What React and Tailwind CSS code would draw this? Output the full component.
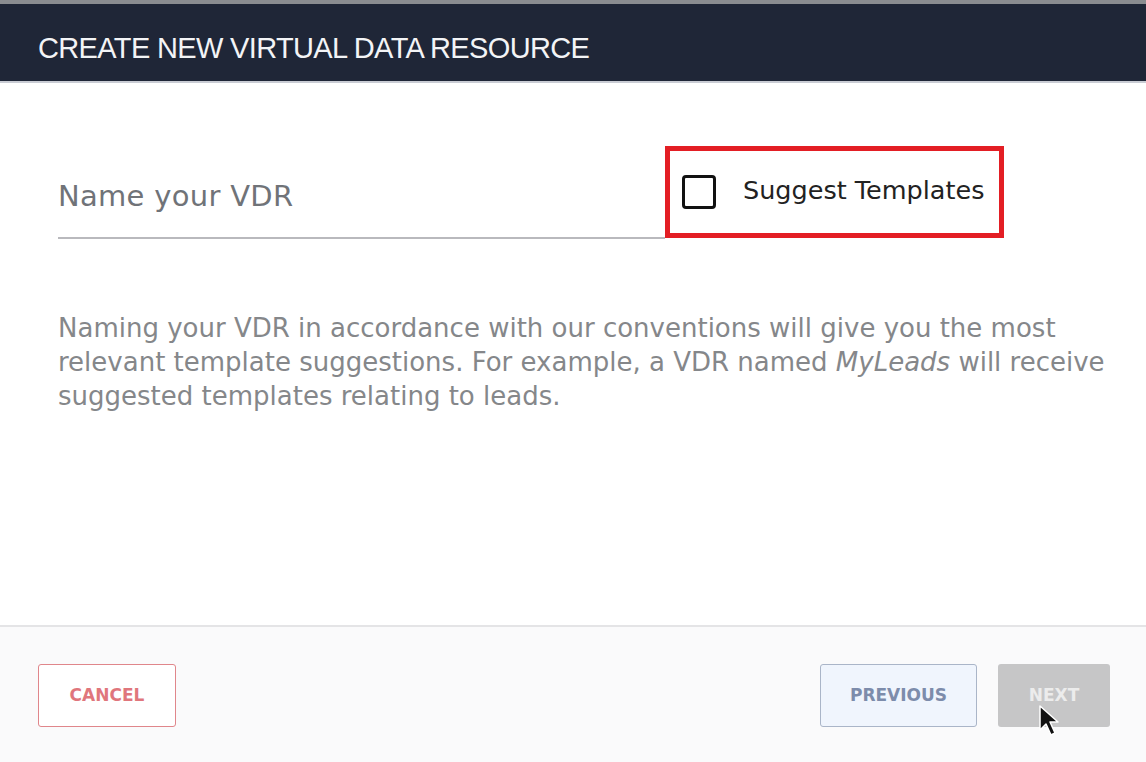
import React from "react";

const body = { fontFamily: "'DejaVu Sans', Verdana, sans-serif" };

const Cursor = () => (
  <svg
    width="22"
    height="34"
    viewBox="0 0 22 34"
    className="absolute left-[40px] top-[40px]"
  >
    <path
      d="M2 2 L2 26 L8 20 L13 31 L17 29 L12 18 L20 18 Z"
      fill="#111"
      stroke="#fff"
      strokeWidth="1.5"
      strokeLinejoin="round"
    />
  </svg>
);

const App = () => {
  return (
    <div className="w-[1146px] h-[762px] flex flex-col bg-white overflow-hidden" style={body}>
      <div className="h-[4px] bg-[#8a8c90] shrink-0" />
      <div className="h-[79px] shrink-0 bg-[#1f2637] border-b-2 border-[#c9ccd4] flex items-center pl-[38px]">
        <h1
          className="text-[29px] text-[#f3f4f6] tracking-[-0.65px] mt-[12px]"
          style={{ fontFamily: "'Liberation Sans', Arial, sans-serif" }}
        >
          CREATE NEW VIRTUAL DATA RESOURCE
        </h1>
      </div>

      <div className="flex-1 px-[58px] pt-[62px]">
        <div className="flex items-end">
          <div className="w-[607px] h-[94px] border-b-2 border-[#b9b9bd] flex items-center">
            <input
              type="text"
              placeholder="Name your VDR"
              className="w-full bg-transparent outline-none text-[29px] tracking-[0.3px] text-[#333] placeholder:text-[#707378] mt-[12px]"
            />
          </div>
          <div className="w-[339px] h-[92px] border-[5px] border-[#e31e24] flex items-center pl-[12px] mb-[1px]">
            <span className="w-[34px] h-[34px] border-[3px] border-[#111] rounded-[4px] shrink-0" />
            <span className="ml-[27px] text-[25.5px] text-[#222] mt-[-4px]">Suggest Templates</span>
          </div>
        </div>

        <p className="mt-[72px] text-[26px] leading-[34px] text-[#85878a] whitespace-nowrap">
          Naming your VDR in accordance with our conventions will give you the most
          <br />
          relevant template suggestions. For example, a VDR named <em>MyLeads</em> will receive
          <br />
          suggested templates relating to leads.
        </p>
      </div>

      <div className="h-[137px] shrink-0 border-t-2 border-[#e4e4e6] bg-[#fafafb] flex items-start justify-between pl-[38px] pr-[36px] pt-[37px]">
        <button className="w-[138px] h-[63px] border-[1.5px] border-[#e0868b] rounded-[3px] bg-white text-[#e0767c] text-[17px] font-bold">
          CANCEL
        </button>
        <div className="flex gap-[21px]">
          <button className="w-[157px] h-[63px] border-[1.5px] border-[#aab5c8] rounded-[3px] bg-[#f0f5fd] text-[#7d8cab] text-[17px] font-bold">
            PREVIOUS
          </button>
          <button className="relative w-[112px] h-[63px] rounded-[3px] bg-[#c6c6c7] text-[#ececec] text-[17px] font-bold">
            NEXT
            <Cursor />
          </button>
        </div>
      </div>
    </div>
  );
};

export default App;
